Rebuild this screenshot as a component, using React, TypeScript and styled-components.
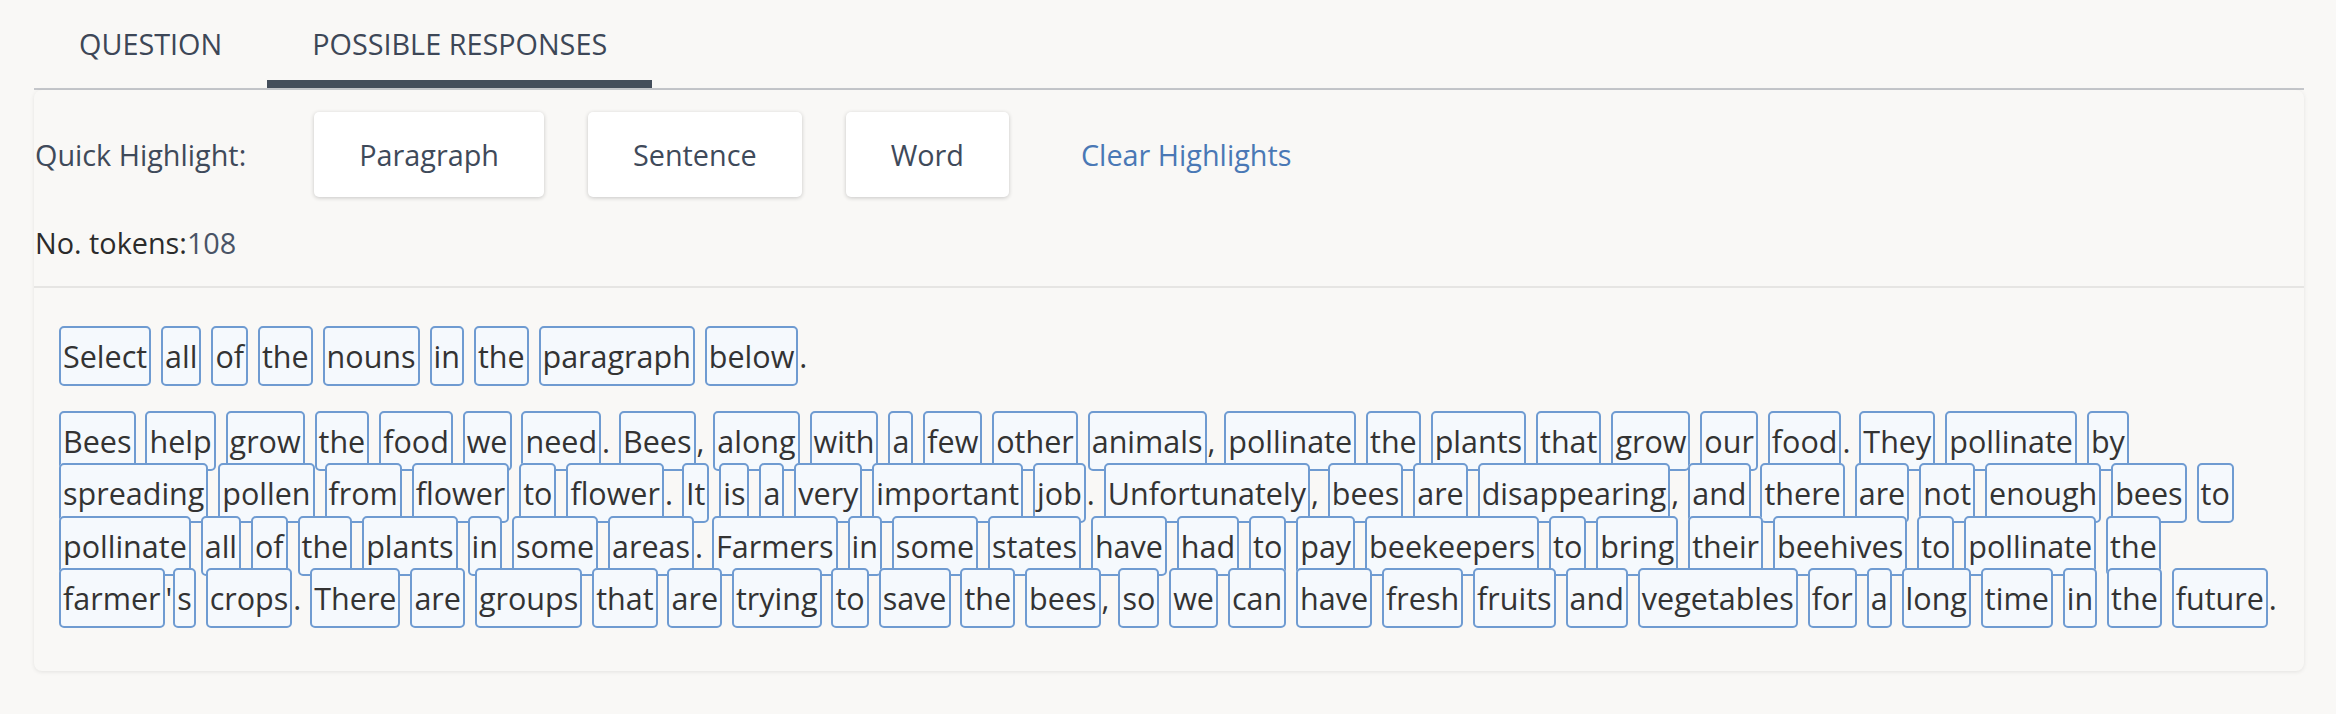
import React, { useState } from 'react';
import styled, { createGlobalStyle } from 'styled-components';

const GlobalStyle = createGlobalStyle`
  html, body {
    margin: 0;
    padding: 0;
    background: #f9f8f6;
  }
  body {
    font-family: "Open Sans", "Noto Sans", sans-serif;
    color: #333333;
  }
`;

const Page = styled.div`
  width: 2336px;
  min-height: 714px;
  box-sizing: border-box;
  padding: 0 32px 0 34px;
`;

const TabList = styled.div`
  display: flex;
  border-bottom: 2px solid #c5c7cb;
`;

const Tab = styled.button<{ active: boolean }>`
  box-sizing: border-box;
  height: 88px;
  padding: 8px 45px 0;
  line-height: 72px;
  border: none;
  border-bottom: 8px solid ${({ active }) => (active ? '#444e5b' : 'transparent')};
  background: none;
  font-family: inherit;
  font-size: 28.8px;
  color: #3d4757;
  text-transform: uppercase;
  cursor: pointer;
`;

const Card = styled.section`
  border-radius: 8px;
  box-shadow: 0 1px 4px rgba(0, 0, 0, 0.09);
  background: #f9f8f6;
`;

const Header = styled.div`
  padding: 22px 0 23px 1px;
  border-bottom: 2px solid #e6e5e3;
`;

const Toolbar = styled.div`
  display: flex;
  align-items: center;
  gap: 44px;
`;

const Label = styled.span`
  font-size: 28.8px;
  color: #3f4a5a;
  margin-right: 24px;
`;

const HighlightButton = styled.button`
  height: 85px;
  padding: 0 45px;
  border: none;
  border-radius: 5px;
  background: #ffffff;
  box-shadow: 0 1px 4px rgba(0, 0, 0, 0.2);
  font-family: inherit;
  font-size: 28.8px;
  color: #3f4a5a;
  cursor: pointer;
`;

const ClearLink = styled.button`
  padding: 0 28px;
  border: none;
  background: none;
  font-family: inherit;
  font-size: 28.8px;
  color: #4a78b5;
  cursor: pointer;
`;

const TokenCount = styled.div`
  margin-top: 26px;
  font-size: 28.8px;
  line-height: 40px;
  color: #2b2b2b;

  span {
    color: #4a5466;
  }
`;

const Passage = styled.div`
  padding: 10px 22px 14px 24px;
`;

const Paragraph = styled.p`
  margin: 32px 0;
  font-size: 30.5px;
  line-height: 52.6px;
  color: #333333;
`;

const Token = styled.span<{ selected: boolean }>`
  padding: 7px 2px;
  margin: 0 1px;
  border: 2px solid #6f9bd1;
  border-radius: 5px;
  background: ${({ selected }) => (selected ? '#cfe0f5' : '#f5f9fd')};
  cursor: pointer;
`;

const paragraphs = [
  'Select all of the nouns in the paragraph below.',
  "Bees help grow the food we need. Bees, along with a few other animals, pollinate the plants that grow our food. They pollinate by spreading pollen from flower to flower. It is a very important job. Unfortunately, bees are disappearing, and there are not enough bees to pollinate all of the plants in some areas. Farmers in some states have had to pay beekeepers to bring their beehives to pollinate the farmer's crops. There are groups that are trying to save the bees, so we can have fresh fruits and vegetables for a long time in the future.",
];

const App: React.FC = () => {
  const [tab, setTab] = useState(1);
  const [selected, setSelected] = useState<Record<string, boolean>>({});

  const toggle = (key: string) => {
    setSelected((prev) => ({ ...prev, [key]: !prev[key] }));
  };

  return (
    <>
      <GlobalStyle />
      <Page>
        <TabList>
          <Tab active={tab === 0} onClick={() => setTab(0)}>Question</Tab>
          <Tab active={tab === 1} onClick={() => setTab(1)}>Possible Responses</Tab>
        </TabList>

        <Card>
          <Header>
            <Toolbar>
              <Label>Quick Highlight:</Label>
              <HighlightButton>Paragraph</HighlightButton>
              <HighlightButton>Sentence</HighlightButton>
              <HighlightButton>Word</HighlightButton>
              <ClearLink onClick={() => setSelected({})}>Clear Highlights</ClearLink>
            </Toolbar>
            <TokenCount>
              No. tokens:<span>108</span>
            </TokenCount>
          </Header>

          <Passage>
            {paragraphs.map((text, p) => (
              <Paragraph key={p}>
                {text.split(/([A-Za-z]+)/).map((part, i) => {
                  if (i % 2 === 0) return part;
                  const key = `${p}-${i}`;
                  return (
                    <Token key={key} selected={!!selected[key]} onClick={() => toggle(key)}>
                      {part}
                    </Token>
                  );
                })}
              </Paragraph>
            ))}
          </Passage>
        </Card>
      </Page>
    </>
  );
};

export default App;
